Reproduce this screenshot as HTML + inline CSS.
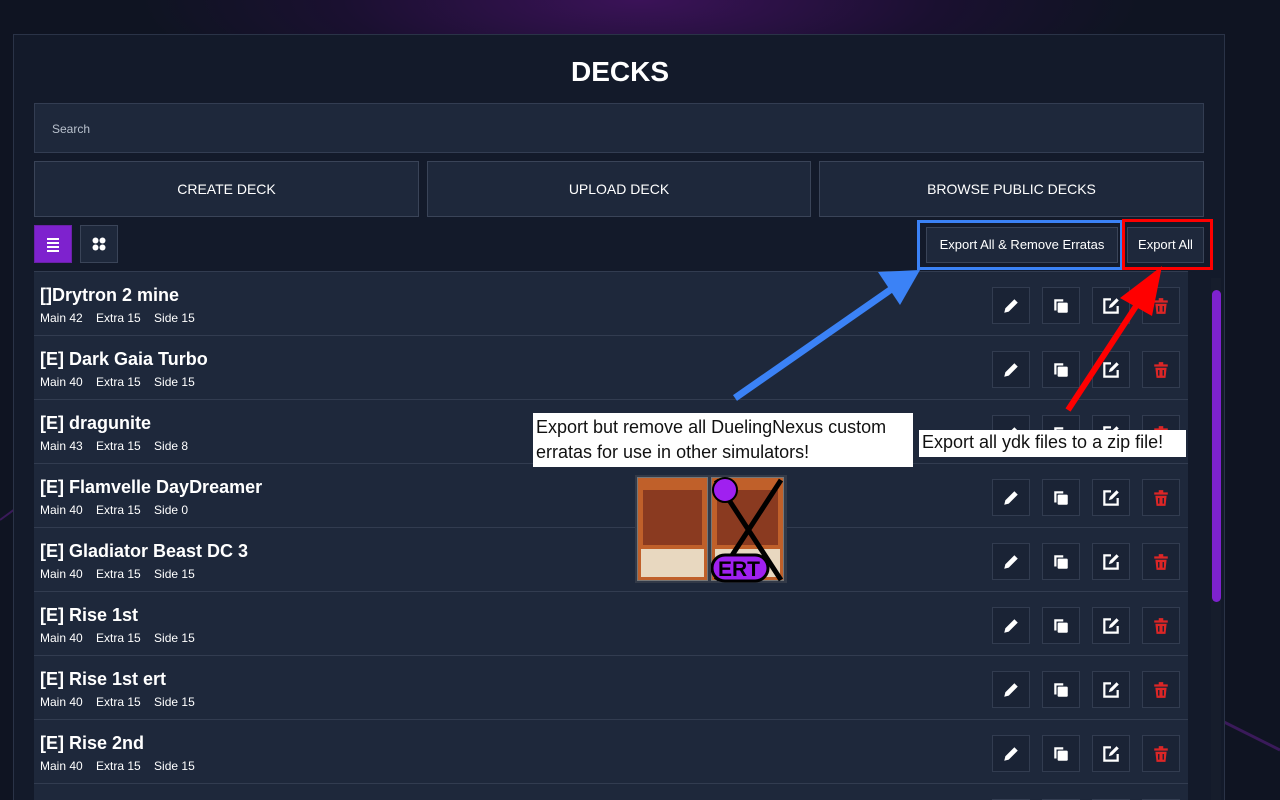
<!DOCTYPE html>
<html style="width:1280px;height:800px;overflow:hidden"><head><style>
*{box-sizing:border-box;margin:0;padding:0}
body{width:1280px;height:800px;overflow:hidden;font-family:"Liberation Sans",sans-serif;color:#fff;
background:radial-gradient(ellipse 500px 120px at 640px 0,#3b1258 0%,#1a1030 60%,transparent 100%),#0f1422;position:relative}
.cont{position:absolute;left:13px;top:34px;width:1212px;height:766px;background:#131a2a;border:1px solid #2a3347;border-bottom:none}
h1{position:absolute;top:56px;left:0;width:1240px;text-align:center;font-size:28px;font-weight:bold}
.search{position:absolute;left:34px;top:103px;width:1170px;height:50px;background:#1e283b;border:1px solid #333d52;font-size:12px;color:#b8c0cc;padding:18px 17px}
.btn{position:absolute;top:161px;height:56px;background:#1e283b;border:1px solid #3a4458;font-size:14px;text-align:center;line-height:54px}
.ib{position:absolute;top:225px;width:38px;height:38px;border:1px solid #3a4458;background:#1e283b}
.ex{position:absolute;top:227px;height:36px;background:#1e283b;border:1px solid #3a4458;font-size:13px;line-height:34px;text-align:center}
.row{position:absolute;left:34px;width:1154px;height:64px;background:#1e283b;border-top:1px solid #323c50;overflow:hidden}
.row b{position:absolute;left:6px;top:13px;font-size:18px}
.row span{position:absolute;left:6px;top:39px;font-size:12px}
.a{position:absolute;top:15px;width:38px;height:37px;border:1px solid #323c50;background:#1a2335;display:flex;align-items:center;justify-content:center}
.note{position:absolute;background:#fff;color:#111;font-size:18px;line-height:25px;padding:2px 3px}
#wrap{position:absolute;left:0;top:0;width:1280px;height:800px;overflow:hidden}
</style></head><body><div id="wrap">
<svg style="position:absolute;left:0;top:0" width="1280" height="800"><path d="M0 520 L300 300" stroke="#3a1a5a" stroke-width="2"/><path d="M1180 700 L1280 750" stroke="#3a1a5a" stroke-width="3"/></svg>
<div class="cont"></div>
<h1>DECKS</h1>
<div class="search">Search</div>
<div class="btn" style="left:34px;width:385px">CREATE DECK</div>
<div class="btn" style="left:427px;width:384px">UPLOAD DECK</div>
<div class="btn" style="left:819px;width:385px">BROWSE PUBLIC DECKS</div>
<div class="ib" style="left:34px;background:#7e22ce;border-color:#6b21a8"><svg width="36" height="36"><g fill="#fff"><rect x="12" y="12" width="12" height="2"/><rect x="12" y="16" width="12" height="2"/><rect x="12" y="20" width="12" height="2"/><rect x="12" y="24" width="12" height="2"/></g></svg></div>
<div class="ib" style="left:80px"><svg width="36" height="36"><g fill="#fff"><circle cx="14.5" cy="14.5" r="3"/><circle cx="21.5" cy="14.5" r="3"/><circle cx="14.5" cy="21.5" r="3"/><circle cx="21.5" cy="21.5" r="3"/></g></svg></div>
<div style="position:absolute;left:917px;top:220px;width:206px;height:50px;border:3px solid #3b82f6"></div>
<div style="position:absolute;left:1122px;top:219px;width:91px;height:51px;border:3px solid #f00"></div>
<div class="ex" style="left:926px;width:192px">Export All &amp; Remove Erratas</div>
<div class="ex" style="left:1127px;width:77px">Export All</div>
<div style="position:absolute;left:1211px;top:278px;width:10px;height:522px;background:#161d2c"></div>
<div style="position:absolute;left:1212px;top:290px;width:9px;height:312px;background:#7e22ce;border-radius:5px"></div>
<div id="rows"></div>
<script>
var d=[["[]Drytron 2 mine",42,15,15],["[E] Dark Gaia Turbo",40,15,15],["[E] dragunite",43,15,8],["[E] Flamvelle DayDreamer",40,15,0],["[E] Gladiator Beast DC 3",40,15,15],["[E] Rise 1st",40,15,15],["[E] Rise 1st ert",40,15,15],["[E] Rise 2nd",40,15,15],["",0,0,0]];
var ic=['<svg width="18" height="18" viewBox="0 0 16 16"><path d="M2 14l1-4 8-8 3 3-8 8z" fill="#fff"/></svg>','<svg width="18" height="18" viewBox="0 0 16 16"><path d="M2 2h8v2H4v8H2z" fill="#fff"/><rect x="5" y="5" width="9" height="9" rx="1" fill="#fff"/></svg>','<svg width="20" height="20" viewBox="0 0 18 18"><path d="M9 3H3v12h12V9" stroke="#fff" stroke-width="2" fill="none"/><path d="M7 11l1-3 6-6 2 2-6 6z" fill="#fff"/></svg>','<svg width="18" height="18" viewBox="0 0 16 16"><path d="M2 3h12v2H2zM6 1h4v2H6zM3 6h10l-1 9H4z" fill="#dc2626"/><path d="M6 8v5M10 8v5" stroke="#1a2335" stroke-width="1.2"/></svg>'];
var h='';d.forEach(function(r,i){var t=271+i*64;var hh=i==8?17:64;h+='<div class="row" style="top:'+t+'px;height:'+hh+'px">'+(r[0]?'<b>'+r[0]+'</b><span>Main '+r[1]+'&nbsp;&nbsp;&nbsp; Extra '+r[2]+'&nbsp;&nbsp;&nbsp; Side '+r[3]+'</span>':'');[958,1008,1058,1108].forEach(function(x,j){h+='<div class="a" style="left:'+x+'px">'+ic[j]+'</div>'});h+='</div>'});document.getElementById('rows').innerHTML=h;
</script>
<div class="note" style="left:533px;top:413px;width:380px;height:54px">Export but remove all DuelingNexus custom erratas for use in other simulators!</div>
<div class="note" style="left:919px;top:430px;width:267px;height:27px;padding-top:0">Export all ydk files to a zip file!</div>
<div style="position:absolute;left:635px;top:475px;width:152px;height:108px;background:#333a48;overflow:hidden">
<div style="position:absolute;left:2px;top:2px;width:71px;height:104px;background:#c0602a;border:1px solid #777;overflow:hidden"><div style="margin:12px 5px 4px;height:55px;background:#8a3a20"></div><div style="margin:0 3px;height:28px;background:#e8d8c0"></div></div>
<div style="position:absolute;left:76px;top:2px;width:73px;height:104px;background:#c0602a;border:1px solid #777;overflow:hidden"><div style="margin:12px 5px 4px;height:55px;background:#8a3a20"></div><div style="margin:0 3px;height:28px;background:#e8d8c0"></div></div>
<svg style="position:absolute;left:76px;top:0" width="76" height="108"><path d="M5 5L70 105M70 5L5 105" stroke="#000" stroke-width="5"/><circle cx="14" cy="15" r="12" fill="#a020f0" stroke="#000" stroke-width="2"/><rect x="1" y="80" width="56" height="26" rx="13" fill="#a020f0" stroke="#000" stroke-width="3"/><text x="7" y="101" font-size="21" font-weight="bold" font-family="Liberation Sans" fill="#000">ERT</text></svg></div>
<svg style="position:absolute;left:0;top:0" width="1280" height="800">
<path d="M735 398L893 288" stroke="#3b82f6" stroke-width="7"/><path d="M920 270L878 272 900 305z" fill="#3b82f6"/>
<path d="M1068 410L1140 300" stroke="#f00" stroke-width="6"/><path d="M1162 266L1120 298 1152 316z" fill="#f00"/>
</svg>
</div></body></html>
